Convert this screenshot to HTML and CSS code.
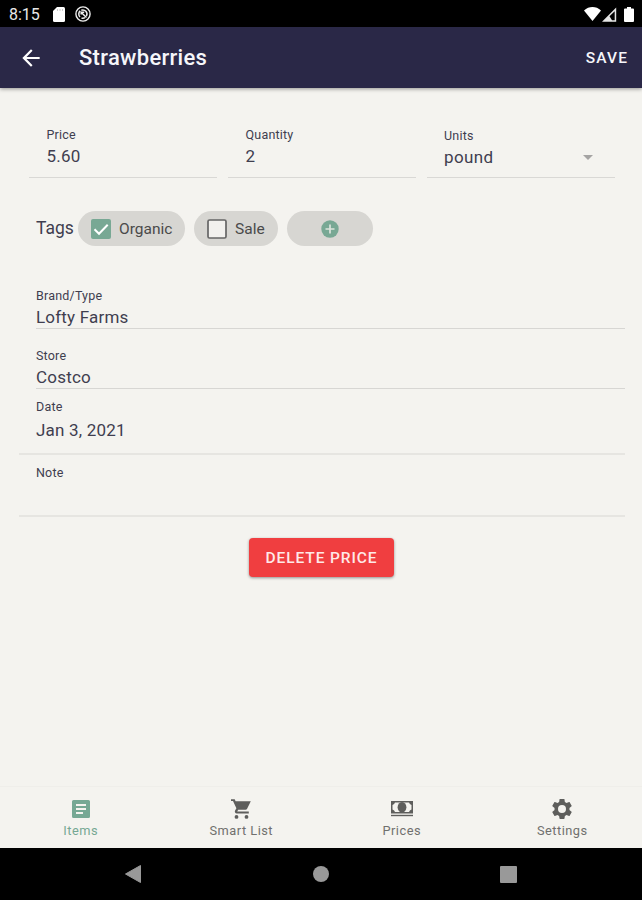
FILE: index.html
```html
<!DOCTYPE html>
<html lang="en">
<head>
<meta charset="utf-8">
<title>Strawberries</title>
<link rel="stylesheet" href="styles.css">
</head>
<body>
<div class="status">
  <span class="clock">8:15</span>
  <svg class="sd" width="12" height="15" viewBox="0 0 12 15"><path d="M4 0h6.500a1.500 1.500 0 0 1 1.500 1.500v12a1.500 1.500 0 0 1-1.500 1.500h-9A1.500 1.500 0 0 1 0 13.500V4z" fill="#fff"/><path d="M4.500 2v2M7 2v2M9.500 2v2" stroke="#ccc"/></svg>
  <svg class="sync" width="16" height="16" viewBox="0 0 16 16" fill="none" stroke="#eee"><circle cx="8" cy="8" r="7.100" stroke-width="1.400"/><path d="M5 11A4.300 4.300 0 0 1 5.200 4.800M6.300 4.200A4.200 4.200 0 0 1 11.500 10M6.500 12a4.300 4.300 0 0 0 3.500-.3" stroke-width="1.500"/><path d="M6 6.200l5.500 5.300M6.200 8.500V6.200h3" stroke-width="1.500"/></svg>
  <div class="signals">
    <svg width="17" height="14" viewBox="0 0 17 14"><path d="M0 3.500C5-1.100 12-1.100 17 3.500L8.500 14z" fill="#fff"/></svg>
    <svg width="15" height="15" viewBox="0 0 15 15"><path fill="#e6e6e6" fill-rule="evenodd" d="M0 14.800L14.200.5v14.300zM7.500 9.300L12.700 4.200v9.100H10z"/></svg>
    <svg class="battery" width="10" height="15" viewBox="0 0 10 15"><path d="M3 0h4v1.500h2a1 1 0 0 1 1 1V14a1 1 0 0 1-1 1H1a1 1 0 0 1-1-1V2.500a1 1 0 0 1 1-1h2z" fill="#fff"/></svg>
  </div>
</div>
<header class="toolbar">
  <svg class="back" width="26" height="26" viewBox="0 0 24 24"><path d="M20 11H7.830l5.590-5.590L12 4l-8 8 8 8 1.410-1.410L7.830 13H20v-2z" fill="#fff"/></svg>
  <h1>Strawberries</h1>
  <span class="save">SAVE</span>
</header>
<main>
  <div class="amounts">
    <div class="field"><label>Price</label><div class="value">5.60</div></div>
    <div class="field"><label>Quantity</label><div class="value">2</div></div>
    <div class="field units"><label>Units</label><div class="value">pound<i class="caret"></i></div></div>
  </div>
  <div class="tags">
    <span class="tags-title">Tags</span>
    <span class="chip organic"><svg width="20" height="20" viewBox="0 0 20 20"><rect width="20" height="20" rx="2" fill="#78a894"/><path d="M3.500 10.300l4.500 4.500L16.700 5.800" fill="none" stroke="#fff" stroke-width="2"/></svg>Organic</span>
    <span class="chip sale"><svg width="20" height="20" viewBox="0 0 20 20"><rect x="1" y="1" width="18" height="18" rx="1.500" fill="#f2f1ee" stroke="#666" stroke-width="1.700"/></svg>Sale</span>
    <span class="chip add"><svg width="18" height="18" viewBox="0 0 18 18"><circle cx="9" cy="9" r="8.700" fill="#78a894"/><path d="M9 4.500v9M4.500 9h9" stroke="#dbe3dc" stroke-width="1.700"/></svg></span>
  </div>
  <div class="line brand"><label>Brand/Type</label><div class="value">Lofty Farms</div></div>
  <div class="line store"><label>Store</label><div class="value">Costco</div></div>
  <div class="line wide date"><label>Date</label><div class="value">Jan 3, 2021</div></div>
  <div class="line wide note"><label>Note</label></div>
  <button class="delete">DELETE PRICE</button>
</main>
<nav class="tabs">
  <div class="tab active"><svg width="24" height="24" viewBox="0 0 24 24"><path fill="currentColor" fill-rule="evenodd" d="M4.500 3h15A1.500 1.500 0 0 1 21 4.500v15a1.500 1.500 0 0 1-1.500 1.500h-15A1.500 1.500 0 0 1 3 19.500v-15A1.500 1.500 0 0 1 4.500 3zM7 7v2h10V7zM7 11v2h10v-2zM7 15v2h7v-2z"/></svg><span>Items</span></div>
  <div class="tab"><svg width="24" height="24" viewBox="0 0 24 24"><path fill="currentColor" d="M7.500 18a1.900 1.900 0 1 0 0 3.800 1.900 1.900 0 0 0 0-3.800zM2 2.200v1.900h2l3.400 7.200-1.300 2.300c-.8 1.500.2 2.900 1.700 2.900h12v-1.900H8.200l1-1.900h7.300c.7 0 1.300-.4 1.600-1l3.700-7.500H6.600l-.9-2zM17.500 18a1.900 1.900 0 1 0 0 3.800 1.900 1.900 0 0 0 0-3.800z"/></svg><span>Smart List</span></div>
  <div class="tab"><svg width="24" height="24" viewBox="0 0 24 24"><path fill="currentColor" fill-rule="evenodd" d="M1 4h22v12.500H1zM5 5.500A3.500 3.500 0 0 1 2.500 8v4.500A3.500 3.500 0 0 1 5 15h14a3.500 3.500 0 0 1 2.500-2.500V8A3.500 3.500 0 0 1 19 5.500z"/><ellipse cx="12" cy="10.200" rx="4.400" ry="5.200" fill="currentColor"/><path fill="currentColor" d="M1 17.800h22v1.400H1z"/></svg><span>Prices</span></div>
  <div class="tab"><svg width="24" height="24" viewBox="0 0 24 24"><path fill="currentColor" d="M19.430 12.980c.04-.32.070-.64.070-.98s-.03-.66-.07-.98l2.110-1.650c.19-.15.240-.42.120-.64l-2-3.460c-.12-.22-.39-.3-.61-.22l-2.490 1c-.52-.4-1.080-.73-1.690-.98l-.38-2.650C14.460 2.180 14.250 2 14 2h-4c-.25 0-.46.180-.49.420l-.38 2.650c-.61.250-1.170.59-1.690.98l-2.490-1c-.23-.09-.49 0-.61.220l-2 3.460c-.13.220-.07.490.12.640l2.110 1.650c-.04.320-.07.650-.07.980s.03.660.07.980l-2.110 1.650c-.19.150-.24.420-.12.640l2 3.460c.12.220.39.300.61.220l2.490-1c.52.400 1.080.73 1.690.98l.38 2.650c.03.240.24.420.49.420h4c.25 0 .46-.18.490-.42l.38-2.650c.61-.25 1.170-.59 1.690-.98l2.490 1c.23.090.49 0 .61-.22l2-3.460c.12-.22.070-.49-.12-.64l-2.110-1.650zM12 16a4 4 0 1 1 0-8 4 4 0 0 1 0 8z"/></svg><span>Settings</span></div>
</nav>
<div class="system">
  <svg width="16" height="18" viewBox="0 0 16 18"><path d="M15.500.5v17L.5 9z" fill="#999" stroke="#999" stroke-linejoin="round"/></svg>
  <svg width="16" height="16" viewBox="0 0 16 16"><circle cx="8" cy="8" r="8" fill="#999"/></svg>
  <svg width="17" height="17" viewBox="0 0 17 17"><rect width="17" height="17" rx="1" fill="#999"/></svg>
</div>
</body>
</html>
```
FILE: styles.css
```css
* { box-sizing: border-box; }

body {
  margin: 0;
  height: 900px;
  display: flex;
  flex-direction: column;
  overflow: hidden;
  background: #f4f3ef;
  color: #3f3e4f;
  font-family: Roboto, "Liberation Sans", sans-serif;
}

svg { display: block; flex: none; }

.status {
  height: 27px;
  display: flex;
  align-items: center;
  padding: 1px 8px 0 9px;
  background: #000;
  color: #e8e8e8;
}

.clock { width: 44px; font-size: 16px; line-height: 18px; padding-top: 1px; }
.sync { margin-left: 10px; }
.signals { margin-left: auto; display: flex; align-items: center; gap: 1px; }
.battery { margin-left: 6px; }

.toolbar {
  height: 61px;
  flex: none;
  display: flex;
  align-items: center;
  padding: 0 14px 0 18px;
  background: #2a2847;
  color: #f6f6fa;
  box-shadow: 0 1px 4px rgba(0, 0, 0, .4);
}

.toolbar h1 { margin: 0 0 0 35px; font-size: 22px; font-weight: 500; line-height: 28px; letter-spacing: .3px; }
.save { margin-left: auto; font-size: 15.500px; font-weight: 500; letter-spacing: 1.100px; }

main { height: 698px; flex: none; }

label { display: block; font-size: 12.500px; line-height: 16px; letter-spacing: .2px; }
.value { font-size: 17px; line-height: 22px; letter-spacing: .2px; }

.amounts { display: flex; gap: 11px; padding: 39px 0 0 29px; }
.field { width: 188px; height: 51px; padding-left: 17.500px; border-bottom: 1px solid #d9d8d5; }
.field .value { padding-top: 2px; }
.units { padding-top: 1px; padding-left: 17px; }
.units .value { display: flex; align-items: center; justify-content: space-between; padding-right: 22px; letter-spacing: .4px; }
.caret { border: 5px solid transparent; border-top-color: #a5a4a3; border-bottom: 0; }

.tags { display: flex; align-items: center; height: 35px; margin-top: 33px; padding-left: 36px; }
.tags-title { width: 42px; padding-bottom: 2px; font-size: 17.500px; }
.chip {
  display: flex;
  align-items: center;
  height: 35px;
  padding-left: 13px;
  gap: 8px;
  border-radius: 18px;
  background: #d7d6d2;
  color: #4a4a4a;
  font-size: 15.500px;
}
.organic { width: 107px; }
.sale { width: 84px; margin-left: 9px; }
.add { width: 86px; margin-left: 9px; padding: 0; justify-content: center; }

.line { margin-left: 36px; margin-right: 17px; border-bottom: 1px solid #d7d6d3; }
.brand { height: 41px; margin-top: 42px; }
.brand .value { padding-top: 2px; }
.store { height: 41px; margin-top: 19px; }
.store .value { padding-top: 2px; }
.wide { margin-left: 19px; padding-left: 17px; border-bottom: 2px solid #e6e5e1; }
.date { height: 56px; margin-top: 10px; }
.date .value { padding-top: 4px; }
.note { height: 62px; padding-top: 10px; }

.delete {
  display: block;
  width: 145px;
  height: 39px;
  margin: 21px 0 0 249px;
  padding: 0;
  border: 0;
  border-radius: 4px;
  background: #f03e40;
  color: #ffe9e8;
  font: 500 15.500px Roboto, sans-serif;
  letter-spacing: .9px;
  box-shadow: 0 1px 3px rgba(0, 0, 0, .4);
}

.tabs {
  height: 62px;
  flex: none;
  display: flex;
  border-top: 1px solid #efeeea;
  color: #5e5e5c;
}
.tab { flex: 1; display: flex; flex-direction: column; align-items: center; padding: 10px 0 0 1px; }
.tab span { font-size: 12.800px; line-height: 16px; letter-spacing: .5px; margin-top: 2px; color: #70706e; }
.active, .tab.active span { color: #76a894; }

.system {
  height: 52px;
  flex: none;
  display: flex;
  align-items: center;
  justify-content: space-between;
  padding: 0 125px;
  background: #000;
}
```
